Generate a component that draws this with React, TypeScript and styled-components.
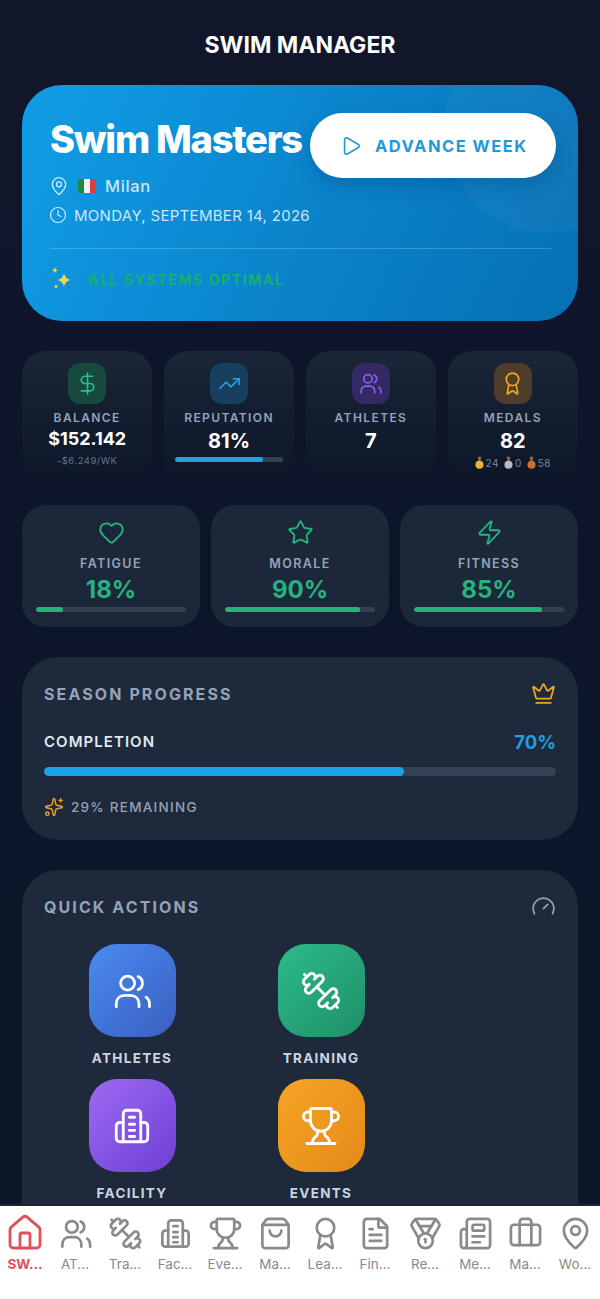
import React from 'react';
import styled, { createGlobalStyle } from 'styled-components';
import {
  Award, Briefcase, Clock, Crown, DollarSign, Dumbbell, FileText, Gauge, Heart, House, MapPin, Medal,
  Newspaper, Play, ShoppingBag, Sparkles, Star, TrendingUp, Trophy, Zap,
} from 'lucide-react';

const GlobalStyle = createGlobalStyle`
  * { box-sizing: border-box; }
  html, body { margin: 0; padding: 0; height: 100%; background: #0f172a; }
  body { font-family: Inter, "Liberation Sans", sans-serif; }
`;

const Layout = styled.div`
  display: flex;
  flex-direction: column;
  height: 100vh;
  overflow: hidden;
  background: linear-gradient(180deg, #12162b 0%, #0c152a 45%, #0d1729 100%);
`;

const Content = styled.main`
  flex: 1;
  min-height: 0;
  overflow: hidden;
  padding: 0 22px;
  display: flex;
  flex-direction: column;
`;

const Title = styled.h1`
  flex-shrink: 0;
  margin: 0;
  height: 85px;
  padding-top: 31px;
  text-align: center;
  font-size: 23px;
  line-height: 28px;
  font-weight: 700;
  color: #fff;
`;

const Hero = styled.section`
  position: relative;
  flex-shrink: 0;
  height: 236px;
  padding: 28px 22px 0 28px;
  border-radius: 40px;
  overflow: hidden;
  background: linear-gradient(115deg, #109ee6 0%, #0b87cf 45%, #0670b3 100%);
`;

const HeroCircle = styled.div`
  position: absolute;
  top: -62px;
  right: -76px;
  width: 210px;
  height: 210px;
  border-radius: 50%;
  background: rgba(255, 255, 255, 0.035);
`;

const HeroTop = styled.div`
  position: relative;
  display: flex;
  justify-content: space-between;
  align-items: flex-start;
`;

const HeroName = styled.h2`
  margin: 0;
  font-size: 38px;
  line-height: 52px;
  font-weight: 800;
  letter-spacing: -1.25px;
  color: #fff;
  white-space: nowrap;
`;

const AdvanceButton = styled.button`
  display: flex;
  align-items: center;
  gap: 13px;
  width: 246px;
  height: 65px;
  padding: 0 0 0 30px;
  border: 0;
  border-radius: 33px;
  background: #fff;
  box-shadow: 0 8px 18px rgba(0, 40, 90, 0.22);
  color: #1f9ad9;
  font-family: inherit;
  font-size: 16.5px;
  font-weight: 700;
  letter-spacing: 1.5px;
  white-space: nowrap;
`;

const HeroRow = styled.div<{ $top: number }>`
  position: relative;
  display: flex;
  align-items: center;
  margin-top: ${(p) => p.$top}px;
  height: 22px;
  color: rgba(255, 255, 255, 0.8);
  font-size: 15px;
  letter-spacing: 0.3px;
`;

const PinIcon = styled(MapPin)`
  margin: 0 9px 0 -1px;
`;

const ClockIcon = styled(Clock)`
  margin: 0 7px 0 -1px;
`;

const FlagIcon = styled.svg`
  margin-right: 9px;
`;

const CityName = styled.span`
  font-size: 16.5px;
  font-weight: 500;
  letter-spacing: 0.6px;
`;

const Divider = styled.div`
  position: relative;
  height: 1px;
  width: 501px;
  margin-top: 22px;
  background: rgba(255, 255, 255, 0.2);
`;

const StatusRow = styled.div`
  display: flex;
  align-items: center;
  gap: 14px;
  margin-top: 17px;
  color: #17b26a;
  font-size: 14px;
  font-weight: 700;
  letter-spacing: 1.6px;
`;

const StatGrid = styled.div`
  flex-shrink: 0;
  display: grid;
  grid-template-columns: repeat(4, 1fr);
  gap: 11.5px;
  margin-top: 30px;
  height: 129px;
`;

const StatCard = styled.div`
  display: flex;
  flex-direction: column;
  align-items: center;
  padding-top: 12px;
  border-radius: 24px;
  background: linear-gradient(180deg, #1b2638 0%, #141e31 45%, #0e172a 100%);
`;

const StatIcon = styled.div<{ $bg: string; $color: string }>`
  display: flex;
  align-items: center;
  justify-content: center;
  width: 38px;
  height: 41px;
  border-radius: 12px;
  background: ${(p) => p.$bg};
  color: ${(p) => p.$color};
`;

const StatLabel = styled.div`
  margin-top: 6px;
  height: 16px;
  font-size: 12px;
  line-height: 16px;
  font-weight: 600;
  letter-spacing: 1.4px;
  color: #94a3b8;
`;

const StatValue = styled.div<{ $small?: boolean }>`
  height: 28px;
  font-size: ${(p) => (p.$small ? 18 : 20)}px;
  line-height: ${(p) => (p.$small ? 26 : 30)}px;
  font-weight: 700;
  color: #fff;
`;

const StatNote = styled.div<{ $top?: number }>`
  display: flex;
  align-items: center;
  margin-top: ${(p) => p.$top || 0}px;
  font-size: 9.5px;
  line-height: 14px;
  letter-spacing: 0.5px;
  color: #64748b;
`;

const MedalCount = styled.span`
  display: inline-flex;
  align-items: center;
  gap: 2px;
  margin-right: 5px;
  font-size: 10px;
  color: #7c889b;
  &:last-child { margin-right: 0; }
`;

const Track = styled.div<{ $height: number; $width?: string; $top?: number }>`
  height: ${(p) => p.$height}px;
  width: ${(p) => p.$width || '100%'};
  margin-top: ${(p) => p.$top || 0}px;
  border-radius: ${(p) => p.$height}px;
  background: #334155;
  overflow: hidden;
  flex-shrink: 0;
`;

const Fill = styled.div<{ $color: string }>`
  height: 100%;
  border-radius: inherit;
  background: ${(p) => p.$color};
`;

const VitalGrid = styled.div`
  flex-shrink: 0;
  display: grid;
  grid-template-columns: repeat(3, 1fr);
  gap: 11px;
  margin-top: 25px;
  height: 122px;
`;

const VitalCard = styled.div`
  display: flex;
  flex-direction: column;
  align-items: center;
  padding: 14px 14px 0;
  border-radius: 24px;
  background: #1c283a;
  color: #24b47e;
`;

const VitalLabel = styled.div`
  margin-top: 9px;
  height: 18px;
  font-size: 12.5px;
  line-height: 18px;
  font-weight: 600;
  letter-spacing: 1.4px;
  color: #94a3b8;
`;

const VitalValue = styled.div`
  height: 30px;
  font-size: 24px;
  line-height: 33px;
  font-weight: 700;
  color: #24b47e;
`;

const Panel = styled.section<{ $top: number; $height?: number }>`
  flex-shrink: 0;
  margin-top: ${(p) => p.$top}px;
  height: ${(p) => (p.$height ? `${p.$height}px` : 'auto')};
  padding: 21.5px 22px 40px;
  border-radius: 36px;
  background: #1e293b;
`;

const PanelHead = styled.div`
  display: flex;
  align-items: center;
  justify-content: space-between;
  height: 30px;
`;

const PanelTitle = styled.h3`
  margin: 0;
  font-size: 16px;
  font-weight: 700;
  letter-spacing: 2.1px;
  color: #94a3b8;
`;

const CompletionRow = styled.div`
  display: flex;
  align-items: center;
  justify-content: space-between;
  margin-top: 20px;
  height: 26px;
`;

const CompletionLabel = styled.span`
  font-size: 15px;
  font-weight: 600;
  letter-spacing: 1.05px;
  color: #e2e8f0;
`;

const CompletionValue = styled.span`
  font-size: 18.5px;
  font-weight: 700;
  color: #1f9fe5;
`;

const RemainingRow = styled.div`
  display: flex;
  align-items: center;
  gap: 7px;
  margin-top: 21px;
  font-size: 13.5px;
  font-weight: 500;
  letter-spacing: 1.25px;
  color: #94a3b8;
`;

const ActionGrid = styled.div`
  display: grid;
  grid-template-columns: 176px 176px;
  column-gap: 13px;
  row-gap: 12px;
  margin-top: 22.5px;
`;

const Action = styled.div`
  display: flex;
  flex-direction: column;
  align-items: center;
`;

const ActionTile = styled.div<{ $from: string; $to: string }>`
  display: flex;
  align-items: center;
  justify-content: center;
  width: 87px;
  height: 93px;
  border-radius: 28px;
  color: #fff;
  background: linear-gradient(135deg, ${(p) => p.$from}, ${(p) => p.$to});
`;

const ActionLabel = styled.div`
  margin-top: 12px;
  height: 18px;
  font-size: 13.5px;
  line-height: 18px;
  font-weight: 700;
  letter-spacing: 1.3px;
  color: #cbd5e1;
`;

const TabBar = styled.nav`
  flex-shrink: 0;
  display: flex;
  height: 95px;
  padding: 7px 0 0;
  background: #fff;
  border-top: 2px solid #1b2230;
`;

const Tab = styled.div<{ $active?: boolean }>`
  flex: 1;
  min-width: 0;
  display: flex;
  flex-direction: column;
  align-items: center;
  color: ${(p) => (p.$active ? '#e0505a' : '#8a8a8a')};
`;

const TabIcon = styled.div`
  display: flex;
  align-items: center;
  justify-content: center;
  height: 40px;
`;

const TabLabel = styled.span<{ $active?: boolean }>`
  margin-top: 2px;
  font-size: 13.5px;
  line-height: 18px;
  font-weight: ${(p) => (p.$active ? 700 : 400)};
  white-space: nowrap;
`;

const TrainingIcon = styled(Dumbbell)`
  transform: scaleX(-1);
`;

type IconProps = { size: number; strokeWidth?: number };

function UsersIcon({ size, strokeWidth = 1.6 }: IconProps) {
  return (
    <svg width={size} height={size} viewBox="0 0 24 24" fill="none" stroke="currentColor" strokeWidth={strokeWidth} strokeLinecap="round" strokeLinejoin="round">
      <circle cx="9.500" cy="7.500" r="4" />
      <path d="M15.500 3.800a4 4 0 0 1 0 7.400" />
      <path d="M3 21v-1.500c0-3 2-5 5-5h3c3 0 5 2 5 5V21" />
      <path d="M20 15.500c1.300.8 2 2.200 2 4V21" />
    </svg>
  );
}

function FacilityIcon({ size, strokeWidth = 1.6 }: IconProps) {
  return (
    <svg width={size} height={size} viewBox="0 0 24 24" fill="none" stroke="currentColor" strokeWidth={strokeWidth} strokeLinecap="round" strokeLinejoin="round">
      <path d="M7 21V5a2 2 0 0 1 2-2h6a2 2 0 0 1 2 2v16" />
      <path d="M7 10H5a2 2 0 0 0-2 2v7a2 2 0 0 0 2 2h14a2 2 0 0 0 2-2v-7a2 2 0 0 0-2-2h-2" />
      <path d="M10.500 7h3M10.500 11h3M10.500 14.500h3M10.500 18h3" />
    </svg>
  );
}

function Flag() {
  return (
    <FlagIcon width="18" height="14" viewBox="0 0 18 14">
      <rect width="6" height="14" fill="#1c8a45" />
      <rect x="6" width="6" height="14" fill="#f4f4f4" />
      <rect x="12" width="6" height="14" fill="#dc3b3f" />
    </FlagIcon>
  );
}

function SparkleEmoji() {
  return (
    <svg width="24" height="26" viewBox="0 0 22 26" fill="#f8d34c">
      <path d="M13 7c.8 4.200 2.800 6.200 7 7-4.200.8-6.200 2.800-7 7-.8-4.200-2.800-6.200-7-7 4.200-.8 6.200-2.800 7-7z" />
      <path d="M4 1c.4 2 1.200 2.800 3 3.200C5.200 4.600 4.400 5.400 4 7.400 3.600 5.400 2.800 4.600 1 4.200 2.800 3.800 3.600 3 4 1z" />
      <path d="M5 18c.3 1.700 1 2.400 2.700 2.700C6 21 5.300 21.700 5 23.400c-.3-1.700-1-2.400-2.700-2.700C4 20.400 4.700 19.700 5 18z" />
    </svg>
  );
}

function MedalEmoji({ color }: { color: string }) {
  return (
    <svg width="9" height="14" viewBox="0 0 10 14">
      <path d="M3 0h4l-1 6H4z" fill="#8a6a4a" />
      <circle cx="5" cy="9" r="4.500" fill={color} />
    </svg>
  );
}

const tabs = [
  { label: 'SW...', icon: House },
  { label: 'AT...', icon: UsersIcon },
  { label: 'Tra...', icon: TrainingIcon },
  { label: 'Fac...', icon: FacilityIcon },
  { label: 'Eve...', icon: Trophy },
  { label: 'Ma...', icon: ShoppingBag },
  { label: 'Lea...', icon: Award },
  { label: 'Fin...', icon: FileText },
  { label: 'Re...', icon: Medal },
  { label: 'Me...', icon: Newspaper },
  { label: 'Ma...', icon: Briefcase },
  { label: 'Wo...', icon: MapPin },
];

const vitals = [
  { label: 'FATIGUE', value: 18, icon: Heart },
  { label: 'MORALE', value: 90, icon: Star },
  { label: 'FITNESS', value: 85, icon: Zap },
];

const actions = [
  { label: 'ATHLETES', icon: UsersIcon, from: '#4a8af0', to: '#3a5fc0' },
  { label: 'TRAINING', icon: TrainingIcon, from: '#2cbb8a', to: '#1f8f68' },
  { label: 'FACILITY', icon: FacilityIcon, from: '#9b6bf2', to: '#6f3ed6' },
  { label: 'EVENTS', icon: Trophy, from: '#f5a524', to: '#e48a1a' },
];

function App(): JSX.Element {
  return (
    <Layout>
      <GlobalStyle />
      <Content>
        <Title>SWIM MANAGER</Title>
        <Hero>
          <HeroCircle />
          <HeroTop>
            <HeroName>Swim Masters</HeroName>
            <AdvanceButton>
              <Play size={22} strokeWidth={1.8} />
              ADVANCE WEEK
            </AdvanceButton>
          </HeroTop>
          <HeroRow $top={-3}>
            <PinIcon size={20} strokeWidth={1.6} />
            <Flag />
            <CityName>Milan</CityName>
          </HeroRow>
          <HeroRow $top={7}>
            <ClockIcon size={18} strokeWidth={1.6} />
            MONDAY, SEPTEMBER 14, 2026
          </HeroRow>
          <Divider />
          <StatusRow>
            <SparkleEmoji />
            ALL SYSTEMS OPTIMAL
          </StatusRow>
        </Hero>

        <StatGrid>
          <StatCard>
            <StatIcon $bg="#17493f" $color="#2bbd8c"><DollarSign size={25} strokeWidth={1.6} /></StatIcon>
            <StatLabel>BALANCE</StatLabel>
            <StatValue $small>$152.142</StatValue>
            <StatNote>-$6.249/WK</StatNote>
          </StatCard>
          <StatCard>
            <StatIcon $bg="#173f5f" $color="#2a9fe0"><TrendingUp size={23} strokeWidth={1.7} /></StatIcon>
            <StatLabel>REPUTATION</StatLabel>
            <StatValue>81%</StatValue>
            <Track $height={5} $width="108px" $top={3}>
              <Fill $color="#2a9fe0" style={{ width: '81%' }} />
            </Track>
          </StatCard>
          <StatCard>
            <StatIcon $bg="#332a63" $color="#8b5cf6"><UsersIcon size={25} strokeWidth={1.6} /></StatIcon>
            <StatLabel>ATHLETES</StatLabel>
            <StatValue>7</StatValue>
          </StatCard>
          <StatCard>
            <StatIcon $bg="#4d3d2a" $color="#f5a524"><Award size={25} strokeWidth={1.6} /></StatIcon>
            <StatLabel>MEDALS</StatLabel>
            <StatValue>82</StatValue>
            <StatNote $top={2}>
              <MedalCount><MedalEmoji color="#eab530" />24</MedalCount>
              <MedalCount><MedalEmoji color="#b9bcc4" />0</MedalCount>
              <MedalCount><MedalEmoji color="#c8702c" />58</MedalCount>
            </StatNote>
          </StatCard>
        </StatGrid>

        <VitalGrid>
          {vitals.map(({ label, value, icon: Icon }) => (
            <VitalCard key={label}>
              <Icon size={27} strokeWidth={1.6} />
              <VitalLabel>{label}</VitalLabel>
              <VitalValue>{value}%</VitalValue>
              <Track $height={5} $top={4}>
                <Fill $color="#24b47e" style={{ width: `${value}%` }} />
              </Track>
            </VitalCard>
          ))}
        </VitalGrid>

        <Panel $top={30} $height={183}>
          <PanelHead>
            <PanelTitle>SEASON PROGRESS</PanelTitle>
            <Crown size={25} strokeWidth={1.7} color="#eda32f" />
          </PanelHead>
          <CompletionRow>
            <CompletionLabel>COMPLETION</CompletionLabel>
            <CompletionValue>70%</CompletionValue>
          </CompletionRow>
          <Track $height={9} $top={12}>
            <Fill $color="#1ba3ea" style={{ width: '70.3%' }} />
          </Track>
          <RemainingRow>
            <Sparkles size={20} strokeWidth={1.7} color="#eda32f" />
            29% REMAINING
          </RemainingRow>
        </Panel>

        <Panel $top={30}>
          <PanelHead>
            <PanelTitle>QUICK ACTIONS</PanelTitle>
            <Gauge size={25} strokeWidth={1.7} color="#94a3b8" />
          </PanelHead>
          <ActionGrid>
            {actions.map(({ label, icon: Icon, from, to }) => (
              <Action key={label}>
                <ActionTile $from={from} $to={to}><Icon size={42} strokeWidth={1.6} /></ActionTile>
                <ActionLabel>{label}</ActionLabel>
              </Action>
            ))}
          </ActionGrid>
        </Panel>
      </Content>

      <TabBar>
        {tabs.map(({ label, icon: Icon }, i) => (
          <Tab key={i} $active={i === 0}>
            <TabIcon>
              <Icon size={i === 0 ? 40 : 35} strokeWidth={i === 0 ? 1.7 : 1.85} />
            </TabIcon>
            <TabLabel $active={i === 0}>{label}</TabLabel>
          </Tab>
        ))}
      </TabBar>
    </Layout>
  );
}

export default App;
